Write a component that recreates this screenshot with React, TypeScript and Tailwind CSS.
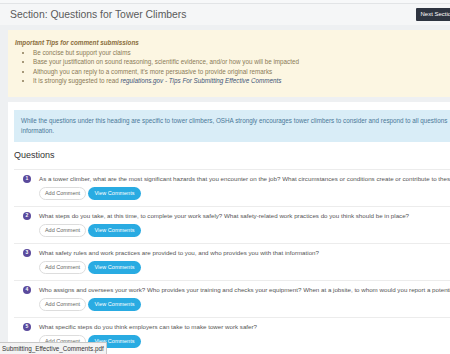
import React from "react";

const tips = [
  "Be concise but support your claims",
  "Base your justification on sound reasoning, scientific evidence, and/or how you will be impacted",
  "Although you can reply to a comment, it's more persuasive to provide original remarks",
];

const questions = [
  "As a tower climber, what are the most significant hazards that you encounter on the job? What circumstances or conditions create or contribute to these hazards?",
  "What steps do you take, at this time, to complete your work safely? What safety-related work practices do you think should be in place?",
  "What safety rules and work practices are provided to you, and who provides you with that information?",
  "Who assigns and oversees your work? Who provides your training and checks your equipment? When at a jobsite, to whom would you report a potential hazard?",
  "What specific steps do you think employers can take to make tower work safer?",
];

function Question({ n, text }: { n: number; text: string }) {
  return (
    <div className="border-t border-[#ececec] pt-[5px] pb-[6px]">
      <div className="flex items-center h-[8px]">
        <span className="ml-[9px] w-[8px] h-[8px] rounded-full bg-[#5a4a9c] text-white text-[5px] font-bold flex items-center justify-center shrink-0">
          {n}
        </span>
        <p className="ml-[8px] text-[6.2px] leading-[8px] text-[#555] whitespace-nowrap">{text}</p>
      </div>
      <div className="flex gap-[2px] mt-[4px] ml-[25px]">
        <button className="w-[47px] h-[13px] rounded-full border border-[#ddd] bg-white text-[5.5px] text-[#666] flex items-center justify-center">
          Add Comment
        </button>
        <button className="w-[53px] h-[13px] rounded-full bg-[#29abe2] text-[5.5px] text-white flex items-center justify-center">
          View Comments
        </button>
      </div>
    </div>
  );
}

export default function App() {
  return (
    <div className="relative w-[450px] h-[354px] overflow-hidden bg-[#eef0f2] font-['Liberation_Sans',Arial,sans-serif]">
      <div className="w-[480px]">
        {/* header */}
        <div className="h-[3px] bg-[#f7f8f9]" />
        <div className="h-[22px] border-t border-[#e2e4e6] bg-[#f5f6f7] flex items-center justify-between pl-[10px] pr-[21px]">
          <h1 className="text-[10.4px] text-[#5a5a5a] whitespace-nowrap">Section: Questions for Tower Climbers</h1>
          <button className="w-[43px] h-[13px] bg-[#2e3440] text-white text-[6px] rounded-[1px] whitespace-nowrap">
            Next Section
          </button>
        </div>

        <div className="flex pt-[5px]">
          <div className="w-[8px] shrink-0" />
          <div className="flex-1">
            {/* tips */}
            <div className="bg-[#fcf6e2] pl-[7px] pt-[8px] pb-[11px] text-[6.3px] leading-[9.5px] text-[#8a7a57]">
              <p className="font-bold italic text-[#8a6d3b]">Important Tips for comment submissions</p>
              <ul className="pl-[18px] list-disc">
                {tips.map((t) => (
                  <li key={t}>{t}</li>
                ))}
                <li>
                  It is strongly suggested to read{" "}
                  <span className="italic text-[#3d5478]">regulations.gov - Tips For Submitting Effective Comments</span>
                </li>
              </ul>
            </div>

            {/* main panel */}
            <div className="mt-[5px] bg-white pl-[6px] pt-[8px] h-[260px]">
              <div className="bg-[#d9edf7] pl-[7px] pr-[8px] pt-[6px] pb-[6px] w-[460px] text-[6.3px] leading-[10px] text-[#4a7898]">
                While the questions under this heading are specific to tower climbers, OSHA strongly encourages tower
                climbers to consider and respond to all questions information.
              </div>
              <h2 className="mt-[8px] mb-[9px] text-[9px] leading-[10px] text-[#333]">Questions</h2>
              <div>
                {questions.map((q, i) => (
                  <Question key={i} n={i + 1} text={q} />
                ))}
              </div>
            </div>
          </div>
        </div>
      </div>

      <div className="absolute left-0 bottom-0 h-[12px] px-[2px] bg-[#f3f3f3] border-t border-r border-[#c8c8c8] text-[6.3px] leading-[11px] text-[#333]">
        Submitting_Effective_Comments.pdf
      </div>
    </div>
  );
}
